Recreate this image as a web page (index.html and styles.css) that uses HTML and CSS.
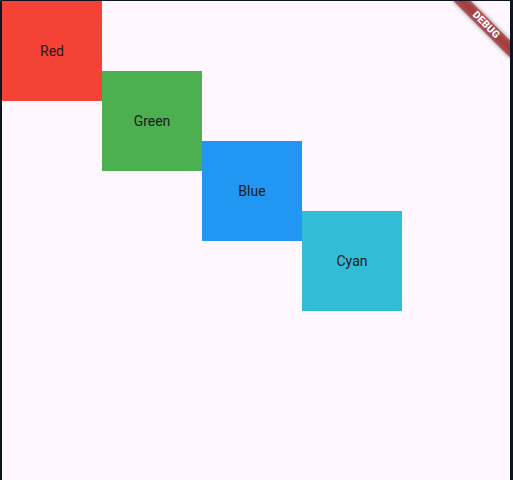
FILE: index.html
```html
<!DOCTYPE html>
<html>
<head>
<meta charset="utf-8">
<link rel="stylesheet" href="styles.css">
</head>
<body>
<div class="app">
  <div class="stack">
    <div class="box red">Red</div>
    <div class="box green">Green</div>
    <div class="box blue">Blue</div>
    <div class="box cyan">Cyan</div>
  </div>
  <div class="banner"><span class="banner-text">DEBUG</span></div>
</div>
</body>
</html>
```
FILE: styles.css
```css
html, body {
  margin: 0;
  padding: 0;
}
body {
  width: 513px;
  height: 480px;
  box-sizing: border-box;
  padding: 1px 3px 0 2px;
  background: #0e1520;
  overflow: hidden;
}
.app {
  position: relative;
  width: 508px;
  height: 479px;
  background: #fef7ff;
  overflow: hidden;
  font-family: Roboto, "Noto Sans", sans-serif;
}
.stack {
  display: flex;
  flex-direction: column;
}
.box {
  width: 100px;
  height: 100px;
  display: flex;
  align-items: center;
  justify-content: center;
  font-size: 14px;
  color: #1d1b20;
  flex: none;
}
.box + .box {
  margin-top: -30px;
}
.red { background: #f44336; }
.green { background: #4caf50; margin-left: 100px; }
.blue { background: #2196f3; margin-left: 200px; }
.cyan { background: #32bcd5; margin-left: 300px; }
.banner {
  position: absolute;
  width: 80px;
  height: 12px;
  left: 443.96px;
  top: 18.04px;
  transform: rotate(45deg);
  display: flex;
  align-items: center;
  justify-content: center;
}
.banner::before {
  content: "";
  position: absolute;
  inset: 0;
  background: rgba(0, 0, 0, 0.5);
  filter: blur(2px);
}
.banner::after {
  content: "";
  position: absolute;
  inset: 0;
  background: rgba(183, 28, 28, 0.627);
}
.banner-text {
  position: relative;
  z-index: 1;
  color: #fff;
  font-size: 10.2px;
  font-weight: 900;
  line-height: 1;
  letter-spacing: 0.2px;
  font-family: Roboto, "Noto Sans", sans-serif;
}
```
